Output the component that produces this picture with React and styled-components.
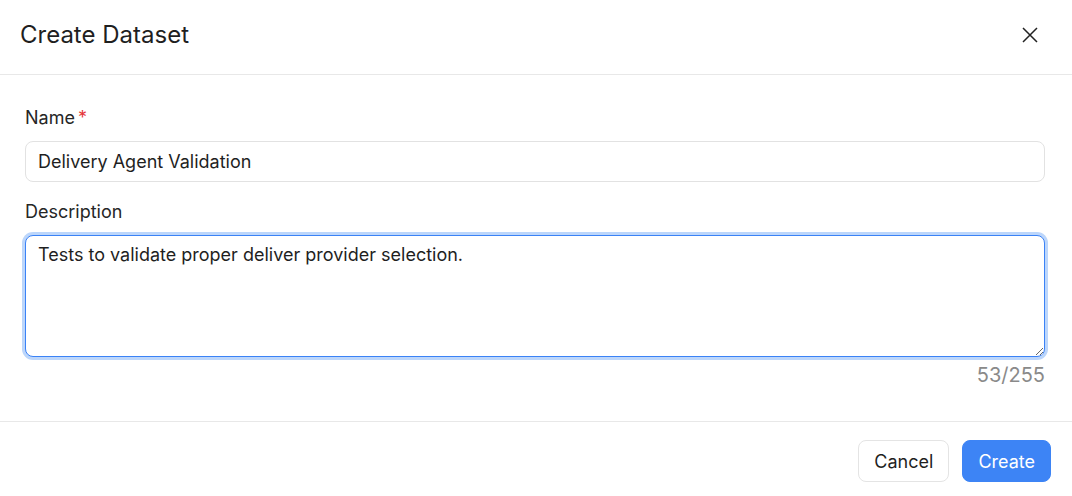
import React from "react";
import styled, { createGlobalStyle } from "styled-components";

const GlobalStyle = createGlobalStyle`
  * { box-sizing: border-box; }
  body {
    margin: 0;
    background: #fff;
    font-family: Inter, "Noto Sans", "Liberation Sans", sans-serif;
    color: #1f1f1f;
  }
`;

const Modal = styled.div`
  width: 1072px;
  height: 496px;
  display: flex;
  flex-direction: column;
  background: #fff;
`;

const Header = styled.div`
  height: 75px;
  display: flex;
  align-items: center;
  justify-content: space-between;
  padding: 0 28px 4px 20px;
  border-bottom: 1px solid #e8e8e8;
`;

const Title = styled.h2`
  margin: 0;
  font-size: 24px;
  font-weight: 400;
  line-height: 30px;
  color: #1f1f1f;
`;

const CloseBtn = styled.button`
  width: 28px;
  height: 28px;
  border: none;
  background: none;
  padding: 0;
  display: flex;
  align-items: center;
  justify-content: center;
  cursor: pointer;
  color: #222;
`;

const Body = styled.div`
  padding: 31px 27px 32px 25px;
  display: flex;
  flex-direction: column;
`;

const Label = styled.label`
  font-size: 18px;
  font-weight: 400;
  line-height: 24px;
  color: #262626;
  margin-bottom: 11px;
  display: flex;
  gap: 3px;
`;

const Required = styled.span`
  color: #e5383b;
`;

const Field = styled.div`
  display: flex;
  flex-direction: column;
  margin-bottom: ${(p) => p.gap || 0}px;
`;

const Input = styled.input`
  height: 41px;
  border: 1px solid #e2e2e2;
  border-radius: 8px;
  padding: 0 12px;
  font: inherit;
  font-size: 18px;
  color: #1f1f1f;
  outline: none;
`;

const TextArea = styled.textarea`
  height: 122px;
  border: 1px solid #3b82f6;
  border-radius: 8px;
  padding: 7px 12px;
  font: inherit;
  font-size: 18px;
  line-height: 24px;
  color: #1f1f1f;
  outline: none;
  resize: vertical;
  box-shadow: 0 0 0 3px #bcd6fb;
`;

const Counter = styled.div`
  align-self: flex-end;
  margin-top: 6px;
  font-size: 20px;
  line-height: 24px;
  color: #8a8a8a;
`;

const Footer = styled.div`
  margin-top: auto;
  height: 75px;
  border-top: 1px solid #e8e8e8;
  display: flex;
  align-items: center;
  justify-content: flex-end;
  gap: 13px;
  padding: 4px 21px 0;
`;

const Button = styled.button`
  height: 42px;
  padding: 0 15px;
  border-radius: 8px;
  font: inherit;
  font-size: 18px;
  cursor: pointer;
  border: 1px solid ${(p) => (p.primary ? "#3d84f5" : "#e4e4e4")};
  background: ${(p) => (p.primary ? "#3d84f5" : "#fff")};
  color: ${(p) => (p.primary ? "#fff" : "#1f1f1f")};
`;

export default function App() {
  return (
    <>
      <GlobalStyle />
      <Modal>
        <Header>
          <Title>Create Dataset</Title>
          <CloseBtn aria-label="Close">
            <svg width="18" height="18" viewBox="0 0 18 18" fill="none" stroke="currentColor" strokeWidth="1.5">
              <path d="M2 2L16 16M16 2L2 16" />
            </svg>
          </CloseBtn>
        </Header>
        <Body>
          <Field gap={18}>
            <Label>
              Name<Required>*</Required>
            </Label>
            <Input defaultValue="Delivery Agent Validation" />
          </Field>
          <Field>
            <Label>Description</Label>
            <TextArea defaultValue="Tests to validate proper deliver provider selection." />
            <Counter>53/255</Counter>
          </Field>
        </Body>
        <Footer>
          <Button>Cancel</Button>
          <Button primary>Create</Button>
        </Footer>
      </Modal>
    </>
  );
}
